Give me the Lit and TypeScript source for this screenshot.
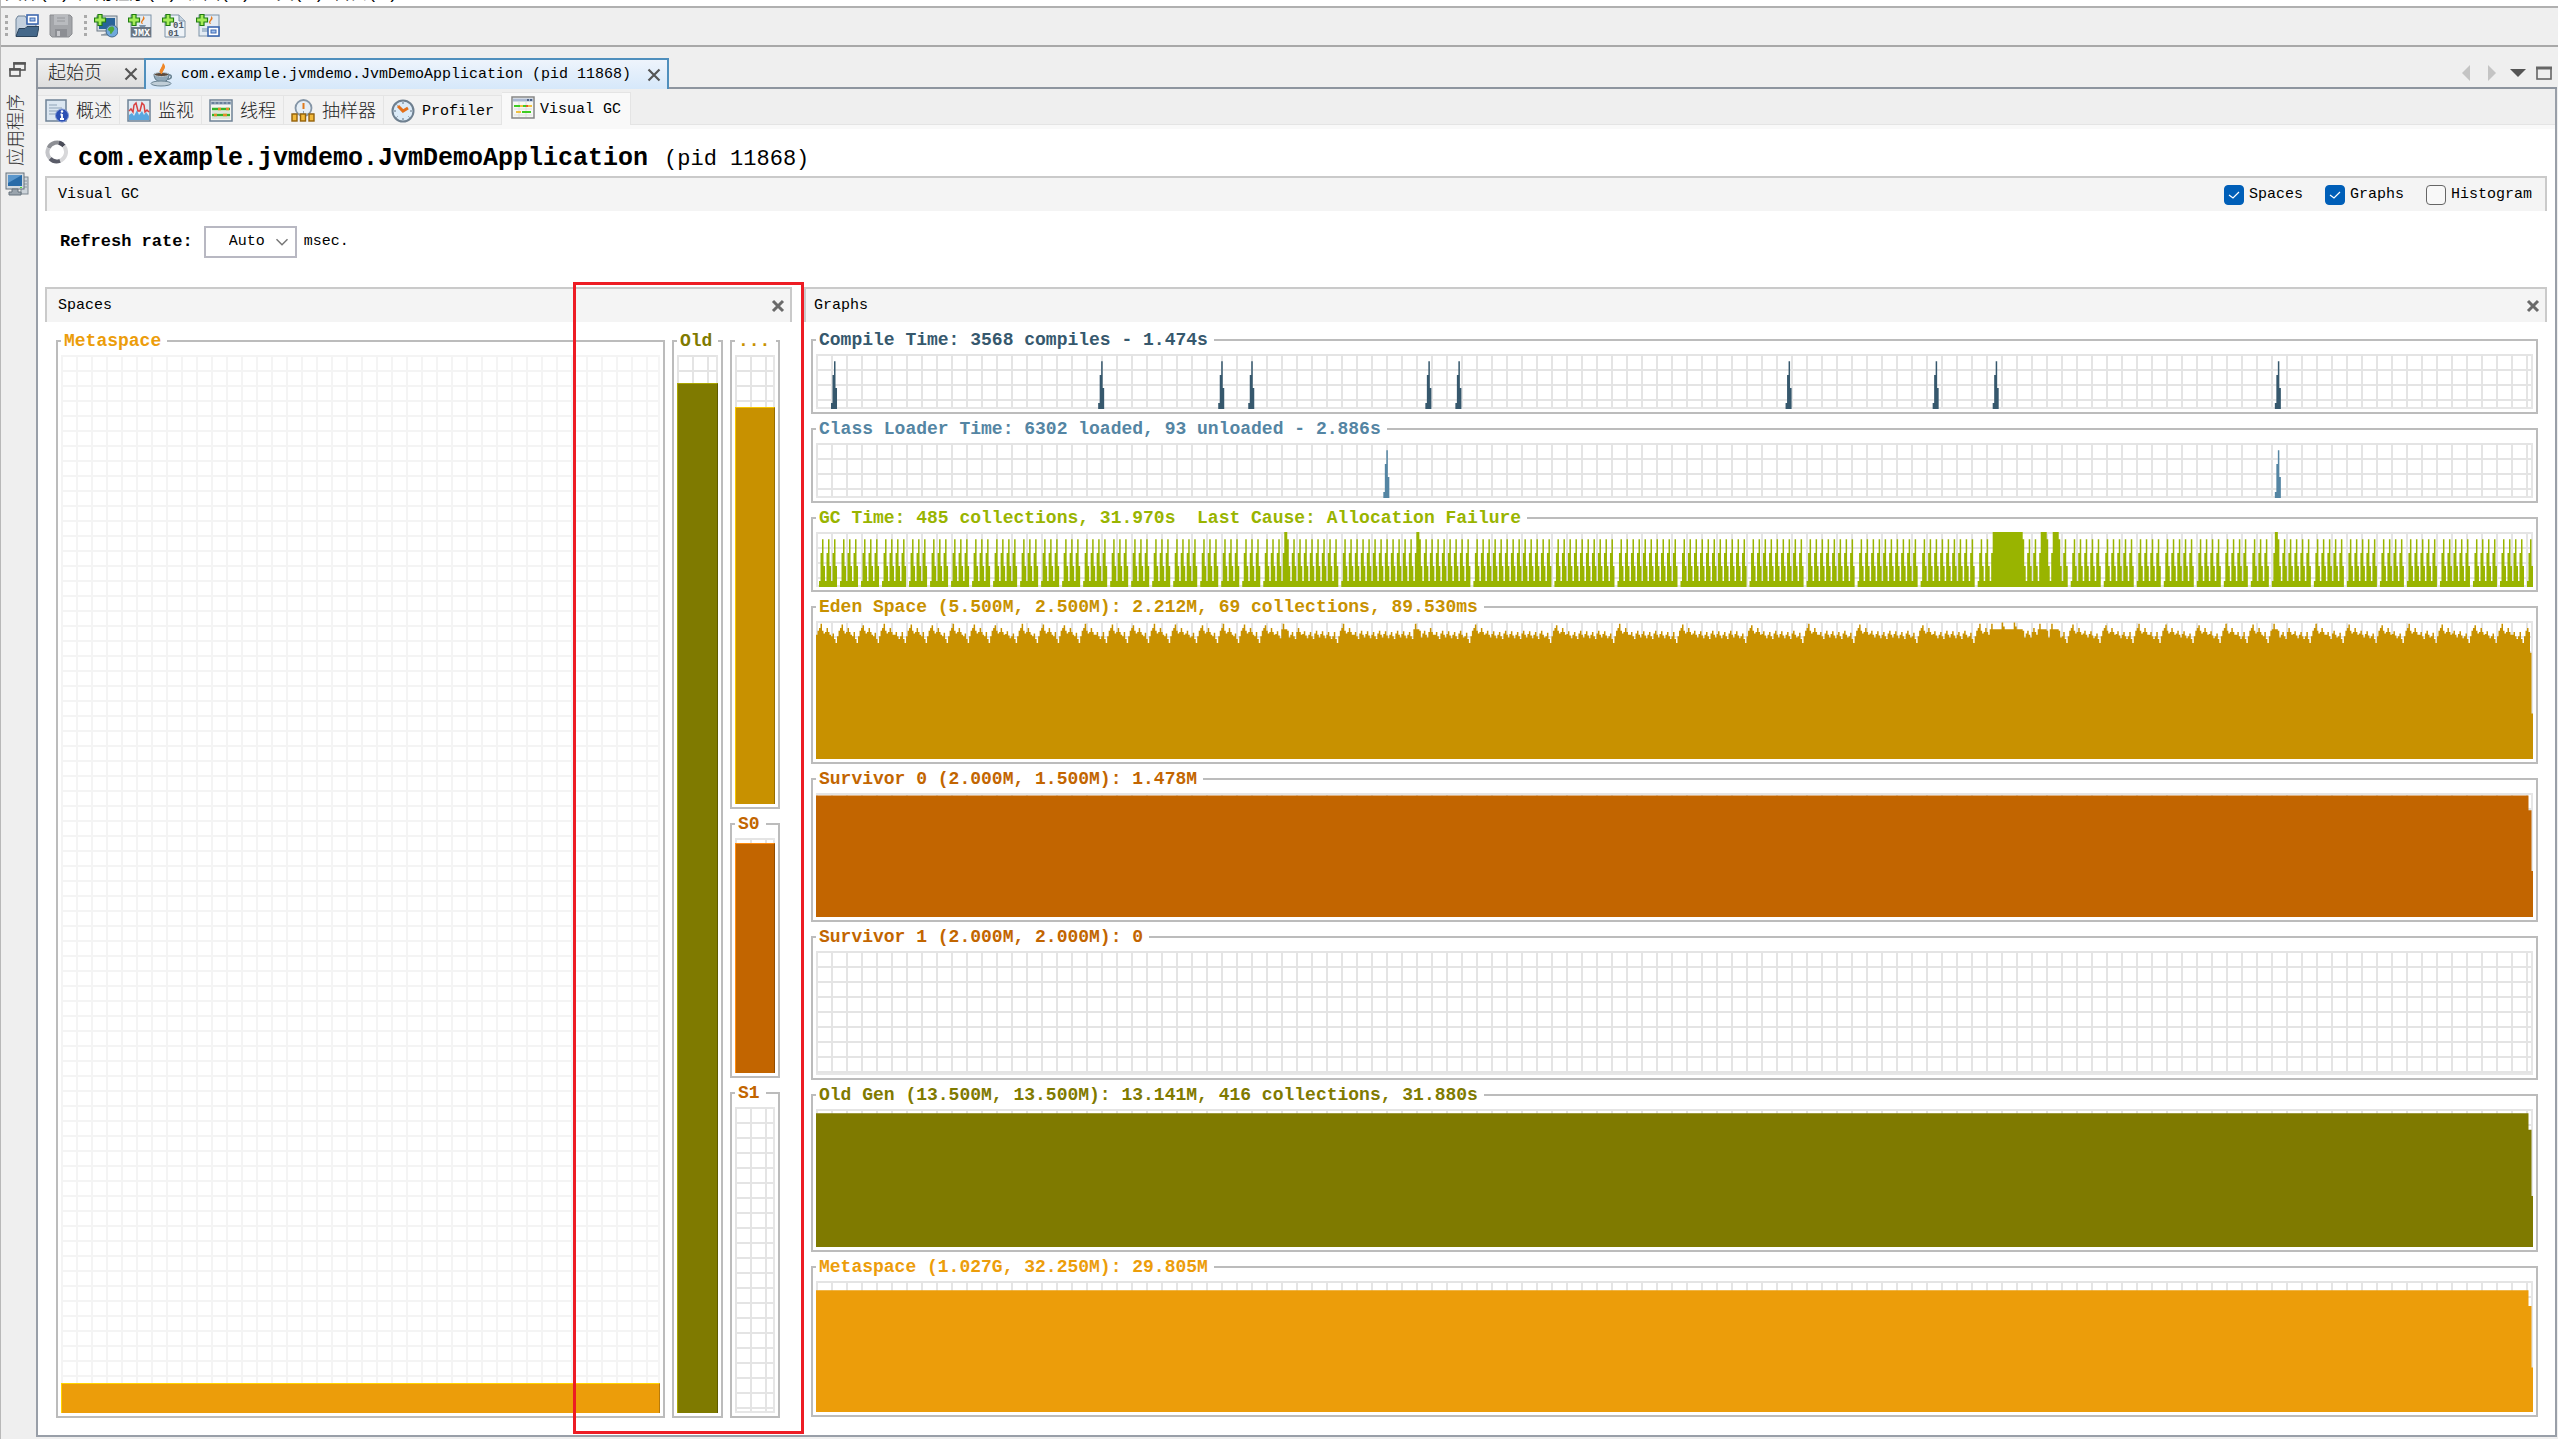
import { LitElement, html, css, svg, nothing } from "lit";
import { customElement, property } from "lit/decorators.js";
import { styleMap } from "lit/directives/style-map.js";

const COLUMNS = 1144;

/** Column heights (percent of the plot) for one short event. */
const SPIKE = [11, 62, 87, 38];

/** Garbage collection activity: groups of short collections; negative numbers are saturated runs. */
const GC_GROUPS: number[][] = [
  [3], [3], [3], [4], [3], [3], [3], [3], [4], [3], [3], [3], [4], [3], [3], [3], [4], [3], [3], [3],
  [3, -2, 8], [12, -2, 8], [13], [10], [10], [11], [9], [8], [10], [9],
  [2, -20, 2, -4, -4, 1],
  [5], [5], [4], [5], [4], [4], [3], [-2, 5], [5], [5], [4], [5], [5], [4], [4], [1],
];

function spikes(starts: number[]): number[] {
  const out = new Array(COLUMNS).fill(0);
  for (const s of starts) SPIKE.forEach((v, i) => (out[s + i] = v));
  return out;
}

function gcSeries(): number[] {
  const out: number[] = [0, 0];
  for (const group of GC_GROUPS) {
    for (const run of group) {
      if (run > 0) for (let i = 0; i < run; i++) out.push(...SPIKE);
      else out.push(11, 62, ...new Array(-run).fill(100), 87, 38);
    }
    out.push(0, 0);
  }
  return out.slice(0, COLUMNS);
}

function edenSeries(): number[] {
  const free: number[] = [10, 7];
  GC_GROUPS.forEach((group, g) => {
    let first = true;
    const wobble = (g * 7) % 3;
    group.forEach((run, r) => {
      if (run > 0) {
        for (let i = 0; i < run; i++) {
          const last = i === run - 1 && r === group.length - 1;
          const w = ((i + g) % 3) / 2;
          if (first) free.push(5, 2 + wobble / 2, 7, 9);
          else if (last) free.push(11, 8 + w, 13, 16);
          else if (i === 1) free.push(8, 5, 8, 10);
          else free.push(9 + w, 7 + w, 10 + w, 12 + w);
          first = false;
        }
      } else {
        free.push(6, 2);
        for (let i = 0; i < -run; i++) free.push(i % 8 === 6 ? 1 : i % 8 === 7 ? 4 : 6);
        free.push(7, 12);
        first = false;
      }
    });
    free.push(11, 7);
  });
  const out = free.map((f) => 100 - f).slice(0, COLUMNS);
  out.splice(COLUMNS - 3, 3, 92, 77, 33);
  return out;
}

function level(full: number, a: number, b: number): number[] {
  const out = new Array(COLUMNS).fill(full);
  out[COLUMNS - 3] = a;
  out[COLUMNS - 2] = a;
  out[COLUMNS - 1] = b;
  return out;
}

function areaPath(series: number[]): string {
  let d = "M0 100";
  let prev = 0;
  series.forEach((v, x) => {
    if (v !== prev) d += `H${x}V${100 - v}`;
    prev = v;
  });
  return `${d}H${series.length}V100Z`;
}

interface Graph { title: string; color: string; weight: number; series?: number[]; }

const GRAPHS: Graph[] = [
  { title: "Compile Time: 3568 compiles - 1.474s", color: "#36586d", weight: 83, series: spikes([10, 188, 268, 288, 406, 426, 646, 744, 784, 972]) },
  { title: "Class Loader Time: 6302 loaded, 93 unloaded - 2.886s", color: "#5485a3", weight: 83, series: spikes([378, 972]) },
  { title: "GC Time: 485 collections, 31.970s  Last Cause: Allocation Failure", color: "#99b400", weight: 83, series: gcSeries() },
  { title: "Eden Space (5.500M, 2.500M): 2.212M, 69 collections, 89.530ms", color: "#c89100", weight: 166, series: edenSeries() },
  { title: "Survivor 0 (2.000M, 1.500M): 1.478M", color: "#c26500", weight: 152, series: level(98, 86, 37) },
  { title: "Survivor 1 (2.000M, 2.000M): 0", color: "#c26500", weight: 152 },
  { title: "Old Gen (13.500M, 13.500M): 13.141M, 416 collections, 31.880s", color: "#7f7a00", weight: 166, series: level(97, 85, 37) },
  { title: "Metaspace (1.027G, 32.250M): 29.805M", color: "#ec9d0a", weight: 159, series: level(93, 81, 34) },
];

const shared = css`
  *, *::before, *::after { box-sizing: border-box; }
  fieldset {
    margin: 0;
    min-width: 0;
    min-height: 0;
    height: 100%;
    padding: 5px 3px 3px;
    border: 2px solid #bcbcbc;
    display: flex;
    flex-direction: column;
  }
  legend {
    padding: 0 6px 0 3px;
    font: bold 18px/18px "Liberation Mono", monospace;
    white-space: pre;
  }
  .grid {
    flex: 1;
    min-height: 0;
    display: flex;
    flex-direction: column;
    justify-content: flex-end;
    background:
      linear-gradient(#e6e6e6, #e6e6e6) right / 2px 100% no-repeat,
      linear-gradient(#e6e6e6, #e6e6e6) bottom / 100% 2px no-repeat,
      linear-gradient(to right, #e4e4e4 2px, transparent 2px) 0 0 / 15px 15px,
      linear-gradient(#e4e4e4 2px, transparent 2px) 0 0 / 15px 15px;
  }
`;

@customElement("gc-graph")
class GcGraph extends LitElement {
  @property({ attribute: false }) graph!: Graph;

  static styles = [shared, css`
    :host { display: block; min-height: 0; }
    svg { display: block; width: 100%; height: 100%; min-height: 0; }
  `];

  render() {
    const g = this.graph;
    return html`<fieldset>
      <legend style=${styleMap({ color: g.color })}>${g.title}</legend>
      <div class="grid">
        ${g.series
          ? html`<svg viewBox="0 0 1144 100" preserveAspectRatio="none" aria-hidden="true"><path d=${areaPath(g.series)} fill=${g.color}></path></svg>`
          : nothing}
      </div>
    </fieldset>`;
  }
}

@customElement("gc-space")
class GcSpace extends LitElement {
  @property() name = "";
  @property() kind = "";
  @property({ type: Number }) used = 0;

  static styles = [shared, css`
    :host { display: block; min-height: 0; min-width: 0; }
    .meta { --c: #ec9d0a; --hi: #ffd400; --lo: #b87a08; }
    .old { --c: #7f7a00; --hi: #aaa500; --lo: #5e5a00; }
    .eden { --c: #c89100; --hi: #f7c600; --lo: #976d00; }
    .survivor { --c: #c26500; --hi: #ff8d10; --lo: #914c00; }
    legend { color: var(--c); }
    .meta .grid {
      background:
        linear-gradient(#f5f5f5, #f5f5f5) right / 2px 100% no-repeat,
        linear-gradient(to right, #f4f4f4 2px, transparent 2px) 0 0 / 15px 15px,
        linear-gradient(#f4f4f4 2px, transparent 2px) 0 0 / 15px 15px;
    }
    .fill {
      background: var(--c);
      border-top: 1px solid var(--hi);
      border-left: 1px solid var(--hi);
      border-right: 1px solid var(--lo);
    }
  `];

  render() {
    return html`<fieldset class=${this.kind}>
      <legend>${this.name}</legend>
      <div class="grid">
        ${this.used ? html`<div class="fill" style=${styleMap({ height: `${this.used}%` })}></div>` : nothing}
      </div>
    </fieldset>`;
  }
}

const plus = svg`<path d="M4 0.5h4v3.500h3.500v4H8v3.500H4V8H0.500V4H4z" fill="#a6ec5a" stroke="#1f7d10" stroke-width="1.200"/>`;
const flame = svg`<path d="M14 10c-3-3 2-4 1-8 3 2 1 4 0 5s-1 2 0 3" fill="#e87a1c"/>`;

const icons = {
  open: svg`<path d="M1 22V5l2-3h7l2 3v5h9v12z" fill="#c3d0de" stroke="#6d8197"/><rect x="12" y="1" width="11" height="9" fill="#fff" stroke="#3e68b0" stroke-width="1.600"/><rect x="15" y="4" width="5" height="3" fill="#9fc0ee" stroke="#3e68b0"/><path d="M1 22.500l3-8h6l2-2h12l-2 10z" fill="#45688a" stroke="#2c445c"/>`,
  save: svg`<path d="M1 1h20l2 2v17l-3 3H3l-2-2z" fill="#a3a5a9" stroke="#8b8d91"/><path d="M5 1h14v10H5z" fill="#b9bbbf"/><path d="M8 4h8M8 7h8" stroke="#96989c"/><rect x="6" y="15" width="12" height="8" fill="#8c8e93"/><rect x="8" y="17" width="3" height="5" fill="#c5c6ca"/>`,
  remote: svg`<rect x="3" y="2" width="20" height="15" fill="#d5dce2" stroke="#6d7a86"/><rect x="5" y="4" width="16" height="11" fill="#28639a"/><path d="M7 21h9v-4" fill="#aab3bb" stroke="#6d7a86"/><circle cx="18" cy="17" r="6" fill="#6fa8dc" stroke="#45698c"/><path d="M14 15c2-3 5-3 6-1s-1 3-2 5-2 1-2-1-3-1-2-3" fill="#4ea83c"/>${plus}`,
  jmx: svg`<rect x="3" y="1" width="20" height="22" fill="#e3ebf3" stroke="#7f93a7"/>${flame}<path d="M11 11h7l-1 2h-5z" fill="#7a93ab"/><rect x="3" y="13" width="20" height="10" fill="#6a7683"/><text x="4" y="22" font-family="Liberation Mono, monospace" font-size="10" font-weight="bold" fill="#fff">JMX</text>${plus}`,
  dump: svg`<path d="M3 1h14l6 6v16H3z" fill="#eef3f8" stroke="#7f93a7"/><path d="M17 1v6h6" fill="#c6d3e0" stroke="#7f93a7"/><text x="11" y="14" font-family="Liberation Mono, monospace" font-size="9" font-weight="bold" fill="#4a5866">01</text><text x="6" y="22" font-family="Liberation Mono, monospace" font-size="9" font-weight="bold" fill="#4a5866">01</text>${plus}`,
  snapshot: svg`<rect x="3" y="1" width="20" height="21" fill="#e3ebf3" stroke="#7f93a7"/>${flame}<path d="M6 14h6v4H6z" fill="#a9bccf"/><rect x="12" y="13" width="11" height="9" fill="#fff" stroke="#3e68b0" stroke-width="1.600"/><rect x="15" y="16" width="5" height="3" fill="#9fc0ee" stroke="#3e68b0"/>${plus}`,
  restore: svg`<rect x="9" y="5" width="11" height="7" fill="none" stroke="#555" stroke-width="1.600"/><path d="M8.200 5.500h12.600" stroke="#555" stroke-width="2.500"/><rect x="5" y="11" width="10" height="7" fill="#efefef" stroke="#555" stroke-width="1.600"/><path d="M4.200 11.500h11.600" stroke="#555" stroke-width="2.500"/>`,
  computer: svg`<rect x="16" y="5" width="7" height="17" fill="#cdd4da" stroke="#7c8790"/><path d="M18 9h4M18 12h4M18 15h4" stroke="#8b959e"/><rect x="1" y="1" width="18" height="16" fill="#d3dae0" stroke="#66727d"/><rect x="3" y="3" width="14" height="11" fill="#286ba8"/><path d="M3 3h14L3 11z" fill="#5b97cc"/><path d="M7 17h6v3h3v3H4v-3h3z" fill="#9aa4ad" stroke="#66727d"/><rect x="15" y="15" width="2" height="1" fill="#4ee03a"/>`,
  java: svg`<path d="M11 12C7 8 12 6 13 0c4 4 1 6 0 8s-1 2-2 4" fill="#ee8322"/><path d="M4 11h15c0 6-3 8-7 8s-8-2-8-8z" fill="#8fa7b8" stroke="#57707f"/><ellipse cx="11.500" cy="11.500" rx="7.500" ry="2" fill="#5c4a3c" stroke="#b9c9d4"/><path d="M18 12c5-1 4 5-1 4" fill="none" stroke="#6b8494" stroke-width="1.600"/><ellipse cx="11" cy="20.500" rx="10" ry="2.500" fill="#c0ced8" stroke="#6b8494"/><path d="M11 11C8 7 12 6 13 1c3 4 0 6-1 10" fill="#f0882a"/>`,
  overview: svg`<rect x="1" y="1" width="20" height="21" fill="#dbe6f1" stroke="#6f8296" stroke-width="1.500"/><path d="M4 6h8M4 9h13M4 12h11M4 15h7" stroke="#8fa3b7"/><circle cx="17" cy="16.500" r="6.500" fill="#2c50b4" stroke="#8098d4"/><path d="M17 15v5M15.500 15.500h1.500M15 20h4" stroke="#fff" stroke-width="1.800"/><circle cx="17" cy="12.500" r="1.200" fill="#fff"/>`,
  monitor: svg`<rect x="1" y="1" width="22" height="21" fill="#dfe9f2" stroke="#6f8296" stroke-width="1.500"/><path d="M2 21v-5l3-2 2 3 3-6 2 5 3-4 2 4 2-3 3 4v4z" fill="#5aa7e0"/><path d="M2 12l2-2 2 3 1-7 2-2 2 8 2 0 2-8 2 2 1 7 2-2 2 2" fill="none" stroke="#d94040" stroke-width="1.500"/>`,
  threads: svg`<rect x="1" y="1" width="22" height="21" fill="#f4f6f2" stroke="#6f8296" stroke-width="1.500"/><path d="M2 4h20" stroke="#8ba0b5" stroke-width="3"/><path d="M3 4h18" stroke="#47617c" stroke-dasharray="2 2"/><path d="M3 10h18M3 16h18" stroke="#35b32a" stroke-width="2.500"/><path d="M9 10h3M17 10h3M5 16h3M14 16h4" stroke="#e38c2c" stroke-width="2.500"/><path d="M3 13h18M3 19h18" stroke="#c9cfc6"/>`,
  sampler: svg`<circle cx="12.500" cy="9" r="8" fill="#e6eff7" stroke="#8495a6" stroke-width="1.800"/><path d="M12.500 4v6" stroke="#e07a1c" stroke-width="2"/><path d="M2 15h21M12.500 12v4" stroke="#93a0ad"/><rect x="1" y="15" width="5" height="7" fill="#f2b93a" stroke="#95620a" stroke-width="1.400"/><rect x="9.500" y="15" width="5" height="7" fill="#f2b93a" stroke="#95620a" stroke-width="1.400"/><rect x="18" y="15" width="5" height="7" fill="#f2b93a" stroke="#95620a" stroke-width="1.400"/>`,
  profiler: svg`<circle cx="12" cy="12" r="10.500" fill="#dcebf8" stroke="#6e7f8f" stroke-width="2"/><path d="M12 3v2M12 19v2M3 12h2M19 12h2M5.500 5.500l1 1M18.500 18.500l-1-1M5.500 18.500l1-1" stroke="#5f7080"/><path d="M7 7l5 5 5-3" fill="none" stroke="#e4701a" stroke-width="3"/>`,
  visualgc: svg`<rect x="1" y="1" width="22" height="21" fill="#f7f8f4" stroke="#858585" stroke-width="1.500"/><path d="M3 13h18M3 19h18M8 6v15M15 6v15" stroke="#dedede"/><path d="M2 4h20" stroke="#aab8d2" stroke-width="3"/><path d="M16 4h5" stroke="#4b6286" stroke-dasharray="2 1" stroke-width="2"/><path d="M3 10h6M12 10h3" stroke="#3dcc22" stroke-width="2"/><path d="M15 10h2" stroke="#e05a2a" stroke-width="2"/><path d="M9 10h3M17 10h4M5 16h5" stroke="#f0c040" stroke-width="2"/><path d="M11 16h9" stroke="#3dcc22" stroke-width="2"/>`,
  spinner: svg`<path d="M3.500 8A9.500 9.500 0 0 1 18 4.500" fill="none" stroke="#8d8f94" stroke-width="4"/><path d="M14 2.700A9.500 9.500 0 0 1 19 6" fill="none" stroke="#4a4c58" stroke-width="4"/><path d="M19 6A9.500 9.500 0 0 1 14 21" fill="none" stroke="#d8d8da" stroke-width="4"/><path d="M15 20.800A9.500 9.500 0 0 1 5 18.500" fill="none" stroke="#5a5c68" stroke-width="4"/><path d="M5 18.500A9.500 9.500 0 0 1 3.500 8" fill="none" stroke="#c4c5c9" stroke-width="4"/>`,
  close: svg`<path d="M6.500 6.500l11 11M17.500 6.500l-11 11" stroke="#555" stroke-width="2.200"/>`,
  shut: svg`<path d="M7 7l10 10M17 7l-10 10" stroke="#6a6a6a" stroke-width="3"/>`,
  left: svg`<path d="M16 4v16l-8-8z" fill="#c4c4c4"/>`,
  right: svg`<path d="M8 4v16l8-8z" fill="#c4c4c4"/>`,
  down: svg`<path d="M4 8h16l-8 8z" fill="#555"/>`,
  maximize: svg`<rect x="5" y="7" width="14" height="11" fill="none" stroke="#666" stroke-width="1.600"/><path d="M4 7h16" stroke="#666" stroke-width="3"/>`,
  chevron: svg`<path d="M6 9l6 6 6-6" fill="none" stroke="#777" stroke-width="1.600"/>`,
};

type IconName = keyof typeof icons;
const icon = (name: IconName) => html`<svg class="icon" viewBox="0 0 24 24" aria-hidden="true">${icons[name]}</svg>`;

@customElement("app-root")
class AppRoot extends LitElement {
  static styles = css`
    *, *::before, *::after { box-sizing: border-box; }
    :host {
      display: block;
      color: #000;
      font: 15px/20px "Liberation Mono", "Noto Sans CJK SC", monospace;
    }
    button, select, input { font: inherit; color: inherit; margin: 0; }
    button { display: flex; align-items: center; padding: 0; border: 0; background: none; }
    h1, h2 { margin: 0; font: inherit; }
    .icon { display: block; width: 24px; height: 24px; flex: none; }
    .app {
      display: flex;
      flex-direction: column;
      height: 100vh;
      min-height: 900px;
      background: #efefef;
      border-left: 1px solid #b8b8b8;
    }
    .menu {
      display: flex;
      align-items: flex-end;
      gap: 9px;
      height: 8px;
      padding-left: 4px;
      overflow: hidden;
      background: #fff;
      border-bottom: 2px solid #b0b0b0;
      font-size: 17px;
      line-height: 22px;
      white-space: nowrap;
    }
    .toolbar {
      display: flex;
      align-items: center;
      height: 39px;
      padding: 0 4px 2px;
      border-bottom: 2px solid #a8a8a8;
    }
    .grip { width: 3px; height: 22px; margin-right: 7px; background: repeating-linear-gradient(#aaa 0 3px, transparent 3px 6px); }
    .tools { display: flex; gap: 10px; margin-right: 11px; }
    .workspace { display: flex; flex: 1; min-height: 0; padding: 11px 1px 2px 0; }
    .dock { display: flex; flex-direction: column; align-items: center; width: 35px; padding: 0 4px 0 0; }
    .docked {
      writing-mode: vertical-rl;
      text-orientation: sideways;
      transform: rotate(180deg);
      margin: 12px 0 6px;
      font-size: 18px;
      color: #333;
      font-weight: 300;
    }
    .editor { display: flex; flex-direction: column; flex: 1; min-width: 0; }
    .tabs { display: flex; height: 31px; }
    .tab {
      display: flex;
      align-items: center;
      gap: 7px;
      padding: 0 1px 0 10px;
      border: 2px solid #8e959f;
      border-right: 0;
      background: linear-gradient(#f0f0f0, #dedede);
    }
    .label { font-size: 18px; font-weight: 300; color: #222; }
    .mono { font-size: 15px; }
    .tab .label { margin-right: 10px; }
    .tab.current {
      padding: 0 1px 0 4px;
      border: 2px solid #4f8fbd;
      border-bottom: 0;
      background: linear-gradient(#eef4fc, #d6e8fa);
    }
    .tab.current .mono { margin-right: 4px; }
    .rest {
      display: flex;
      flex: 1;
      align-items: center;
      justify-content: flex-end;
      gap: 2px;
      padding-right: 1px;
      border-bottom: 2px solid #8e959f;
    }
    .document {
      display: flex;
      flex-direction: column;
      flex: 1;
      min-height: 0;
      border: 2px solid #999fa8;
      border-top: 0;
      background: #fff;
    }
    .views {
      display: flex;
      align-items: flex-end;
      height: 40px;
      background: #efefef;
      border-bottom: 4px solid #f9f9f9;
      box-shadow: inset 0 -1px #e4e4e4;
    }
    .view {
      gap: 7px;
      height: 30px;
      padding: 1px 7px 0;
      border: 1px solid #e4e4e4;
      border-left: 0;
      background: #f2f2f2;
    }
    .view span { padding-top: 3px; }
    .view.chosen { gap: 5px; height: 33px; padding: 0 9px 3px; border-bottom: 0; background: #f9f9f9; }
    .view.chosen span { padding-top: 5px; }
    .page { display: flex; flex-direction: column; flex: 1; min-height: 0; padding: 0 8px 17px 7px; }
    .title { display: flex; align-items: center; gap: 9px; height: 47px; padding-top: 6px; font-size: 22px; line-height: 30px; }
    .title .icon { align-self: flex-start; margin-top: 5px; }
    .title b { font-size: 25px; }
    .title h1 { display: flex; align-items: baseline; gap: 16px; padding-top: 7px; }
    .bar {
      display: flex;
      align-items: center;
      height: 35px;
      padding: 0 13px 0 11px;
      border: 2px solid #cacaca;
      border-bottom: 0;
      background: #f4f4f4;
    }
    .bar h2 { flex: 1; padding-top: 1px; }
    .bar.pane { padding: 0 0 0 11px; }
    .bar.graphs { padding-left: 8px; }
    .checks { display: flex; gap: 22px; }
    .check { display: flex; align-items: center; gap: 5px; }
    .check input {
      appearance: none;
      width: 20px;
      height: 20px;
      border: 1px solid #666;
      border-radius: 4px;
      background: #f8f8f8;
    }
    .check input:checked {
      border-color: #005fb8;
      background: #005fb8;
    }
    .box { display: grid; }
    .box > * { grid-area: 1 / 1; }
    .box .tick { width: 20px; height: 20px; pointer-events: none; }
    .rate { display: flex; align-items: center; height: 76px; padding: 0 0 15px 15px; }
    .rate label { font-weight: bold; font-size: 17px; margin-right: 11px; }
    .select { display: grid; align-items: center; width: 93px; height: 32px; margin-right: 7px; }
    .select > * { grid-area: 1 / 1; }
    .select select { appearance: none; width: 100%; height: 100%; padding: 0 0 0 23px; border: 2px solid #b8b8c2; border-radius: 0; background: #fff; }
    .select .icon { justify-self: end; width: 22px; margin-right: 4px; pointer-events: none; }
    .split { position: relative; display: grid; grid-template-columns: minmax(0, 3fr) minmax(0, 7fr); gap: 12px; flex: 1; min-height: 0; }
    .column { display: flex; flex-direction: column; min-height: 0; }
    .spaces { display: grid; grid-template-columns: 609fr 51fr 50fr; gap: 7px; flex: 1; min-height: 0; padding: 10px 12px 0 11px; }
    .stack { display: grid; grid-template-rows: 477fr 263fr 334fr; gap: 6px; min-height: 0; }
    .plots { display: flex; flex-direction: column; gap: 6px; flex: 1; min-height: 0; padding: 9px 9px 1px 7px; }
    .panes { position: relative; display: flex; flex-direction: column; min-height: 0; }
    .marker { position: absolute; top: -5px; right: -12px; bottom: -16px; width: 231px; border: 3px solid #ed1c24; pointer-events: none; }
  `;

  private tool(name: IconName, label: string) {
    return html`<button aria-label=${label}>${icon(name)}</button>`;
  }

  private view(name: IconName, label: string, latin = false, chosen = false) {
    return html`<button class="view ${chosen ? "chosen" : ""}" role="tab" aria-selected=${chosen}>${icon(name)}<span class=${latin ? "mono" : "label"}>${label}</span></button>`;
  }

  private check(label: string, on: boolean) {
    return html`<label class="check">
      <span class="box"><input type="checkbox" .checked=${on} />
        ${on ? html`<svg class="tick" viewBox="0 0 20 20" aria-hidden="true"><path d="M5 10l4 3 6-6" fill="none" stroke="#fff" stroke-width="1.200"></path></svg>` : nothing}
      </span>${label}</label>`;
  }

  render() {
    return html`<div class="app">
      <nav class="menu">
        <span>文件(F)</span><span>应用程序(A)</span><span>视图(V)</span><span>工具(T)</span><span>窗口(W)</span>
      </nav>
      <div class="toolbar">
        <span class="grip"></span>
        <div class="tools">${this.tool("open", "打开")}${this.tool("save", "保存")}</div>
        <span class="grip"></span>
        <div class="tools">
          ${this.tool("remote", "Remote")}${this.tool("jmx", "JMX")}${this.tool("dump", "Dump")}${this.tool("snapshot", "Snapshot")}
        </div>
      </div>
      <div class="workspace">
        <aside class="dock">
          ${this.tool("restore", "Restore")}
          <button class="docked">应用程序</button>
          ${this.tool("computer", "Local")}
        </aside>
        <main class="editor">
          <div class="tabs">
            <div class="tab"><button class="label">起始页</button>${this.tool("close", "Close")}</div>
            <div class="tab current">${icon("java")}<button class="mono">com.example.jvmdemo.JvmDemoApplication (pid 11868)</button>${this.tool("close", "Close")}</div>
            <div class="rest">${this.tool("left", "Previous")}${this.tool("right", "Next")}${this.tool("down", "List")}${this.tool("maximize", "Maximize")}</div>
          </div>
          <div class="document">
            <div class="views" role="tablist">
              ${this.view("overview", "概述")}${this.view("monitor", "监视")}${this.view("threads", "线程")}${this.view("sampler", "抽样器")}${this.view("profiler", "Profiler", true)}${this.view("visualgc", "Visual GC", true, true)}
            </div>
            <div class="page">
              <div class="title">${icon("spinner")}<h1><b>com.example.jvmdemo.JvmDemoApplication</b><span>(pid 11868)</span></h1></div>
              <div class="bar">
                <h2>Visual GC</h2>
                <div class="checks">${this.check("Spaces", true)}${this.check("Graphs", true)}${this.check("Histogram", false)}</div>
              </div>
              <div class="rate">
                <label for="rate">Refresh rate:</label>
                <span class="select"><select id="rate"><option>Auto</option></select>${icon("chevron")}</span>
                <span>msec.</span>
              </div>
              <div class="split">
                <section class="panes">
                  <div class="bar pane"><h2>Spaces</h2>${this.tool("shut", "Close")}</div>
                  <div class="spaces">
                    <gc-space name="Metaspace" kind="meta" used="2.84"></gc-space>
                    <gc-space name="Old" kind="old" used="97.4"></gc-space>
                    <div class="stack">
                      <gc-space name="..." kind="eden" used="88.4"></gc-space>
                      <gc-space name="S0" kind="survivor" used="98"></gc-space>
                      <gc-space name="S1" kind="survivor"></gc-space>
                    </div>
                  </div>
                  <div class="marker"></div>
                </section>
                <section class="column">
                  <div class="bar pane graphs"><h2>Graphs</h2>${this.tool("shut", "Close")}</div>
                  <div class="plots">
                    ${GRAPHS.map((g) => html`<gc-graph .graph=${g} style=${styleMap({ flex: `${g.weight} 1 0` })}></gc-graph>`)}
                  </div>
                </section>
              </div>
            </div>
          </div>
        </main>
      </div>
    </div>`;
  }
}
